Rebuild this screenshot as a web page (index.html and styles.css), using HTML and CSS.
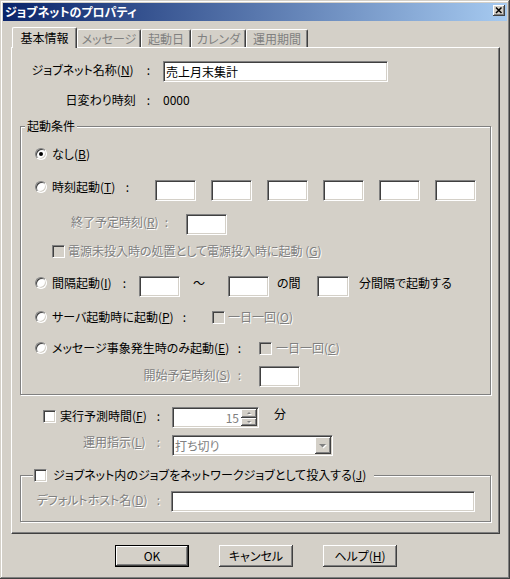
FILE: index.html
```html
<!DOCTYPE html>
<html lang="ja">
<head>
<meta charset="utf-8">
<title>ジョブネットのプロパティ</title>
<link rel="stylesheet" href="styles.css">
</head>
<body>
<div class="window">
  <div class="titlebar">
    <span class="title">ジョブネットのプロパティ</span>
    <span class="close"><svg width="12" height="11" viewBox="0 0 12 11"><path d="M3 2.5 L8.5 8 M8.5 2.5 L3 8" stroke="#000" stroke-width="1.5" fill="none"/></svg></span>
  </div>

  <div class="tabs">
    <div class="tab sel t1">基本情報</div>
    <div class="tab t2">メッセージ</div>
    <div class="tab t3">起動日</div>
    <div class="tab t4">カレンダ</div>
    <div class="tab t5">運用期間</div>
  </div>

  <div class="panel">
    <div class="row r-name">
      <div class="lab w-name mt2">ジョブネット名称(<u>N</u>)<span class="c c13">:</span></div>
      <div class="edit e-name">売上月末集計</div>
    </div>
    <div class="row r-day">
      <div class="lab w-name">日変わり時刻<span class="c c11">:</span></div>
      <div class="val">0000</div>
    </div>

    <div class="group g1">
      <div class="legend">起動条件</div>

      <div class="row mid rC">
        <span class="radio on"></span><span>なし(<u>B</u>)</span>
      </div>

      <div class="row rD">
        <div class="opt w-d"><span class="radio"></span><span>時刻起動(<u>T</u>)</span><span class="c">:</span></div>
        <div class="edits ml26">
          <div class="edit e-s"></div>
          <div class="edit e-s"></div>
          <div class="edit e-s"></div>
          <div class="edit e-s"></div>
          <div class="edit e-s"></div>
          <div class="edit e-s"></div>
        </div>
      </div>

      <div class="row rE">
        <div class="lab w-e mt1 dis">終了予定時刻(<u>R</u>)<span class="c c6">:</span></div>
        <div class="edit e-s ml18"></div>
      </div>

      <div class="row mid rF">
        <span class="chk off"></span><span class="dis">電源未投入時の処置として電源投入時に起動 (<u>G</u>)</span>
      </div>

      <div class="row rG">
        <div class="opt w-g"><span class="radio"></span><span>間隔起動(<u>I</u>)</span><span class="c">:</span></div>
        <div class="edit e-s ml13"></div>
        <span class="tilde">～</span>
        <div class="edit e-s"></div>
        <span class="between">の間</span>
        <div class="edit e-n"></div>
        <span class="ml10">分間隔で起動する</span>
      </div>

      <div class="row mid rH">
        <div class="opt w-h"><span class="radio"></span><span>サーバ起動時に起動(<u>P</u>)</span><span class="c">:</span></div>
        <span class="chk off ml26"></span><span class="dis">一日一回(<u>O</u>)</span>
      </div>

      <div class="row mid rI">
        <div class="opt w-i"><span class="radio"></span><span>メッセージ事象発生時のみ起動(<u>E</u>)</span><span class="c">:</span></div>
        <span class="chk off ml18"></span><span class="dis ml1">一日一回(<u>C</u>)</span>
      </div>

      <div class="row rJ">
        <div class="lab w-j mt2 dis">開始予定時刻(<u>S</u>)<span class="c c7">:</span></div>
        <div class="edit e-s ml18"></div>
      </div>
    </div>

    <div class="row rK">
      <div class="opt w-k mt2"><span class="chk"></span><span class="k-txt">実行予測時間(<u>F</u>)</span><span class="c">:</span></div>
      <div class="edit spin ml12">
        <span class="s-txt dis-plain">15</span>
        <span class="s-btns">
          <span class="s-btn"><svg width="14" height="7" viewBox="0 0 14 7"><polygon points="6,5 10,5 8,3" fill="#fff"/><polygon points="5,4 9,4 7,2" fill="#808080"/></svg></span>
          <span class="s-btn"><svg width="14" height="7" viewBox="0 0 14 7"><polygon points="6,4 10,4 8,6" fill="#fff"/><polygon points="5,3 9,3 7,5" fill="#808080"/></svg></span>
        </span>
      </div>
      <span class="ml15">分</span>
    </div>

    <div class="row rL">
      <div class="lab w-l dis">運用指示(<u>L</u>)<span class="c c11">:</span></div>
      <div class="edit combo ml12">
        <span class="cb-txt dis-plain">打ち切り</span>
        <span class="dd"><svg width="14" height="16" viewBox="0 0 14 16"><polygon points="4,7 11,7 7.5,10.5" fill="#fff"/><polygon points="3,6 10,6 6.5,9.5" fill="#808080"/></svg></span>
      </div>
    </div>

    <div class="group g2">
      <div class="legend lg2"><span class="chk"></span><span class="ml3">ジョブネット内のジョブをネットワークジョブとして投入する(<u>J</u>)</span></div>
      <div class="row rM">
        <div class="lab w-m mt2 dis">デフォルトホスト名(<u>D</u>)<span class="c c9">:</span></div>
        <div class="edit e-host ml11"></div>
      </div>
    </div>
  </div>

  <div class="buttons">
    <div class="btn def">OK</div>
    <div class="btn">キャンセル</div>
    <div class="btn">ヘルプ(<u>H</u>)</div>
  </div>
</div>
</body>
</html>
```

FILE: styles.css
```css
* { box-sizing: border-box; }
html, body { margin: 0; padding: 0; }
body {
  width: 510px; height: 579px; overflow: hidden;
  background: #d4d0c8;
  font-family: "Noto Sans CJK JP", "Noto Sans", sans-serif;
  font-size: 12px; line-height: 14px; color: #000;
  font-feature-settings: "palt" 1;
}
u { text-decoration: underline; text-underline-offset: 1px; }

.window {
  width: 510px; height: 579px; padding: 3px; background: #d4d0c8;
  box-shadow: inset -1px -1px 0 #404040, inset 1px 1px 0 #d4d0c8,
              inset -2px -2px 0 #808080, inset 2px 2px 0 #fff;
}
.titlebar {
  height: 18px; display: flex; align-items: flex-start; justify-content: space-between;
  background: linear-gradient(to right, #0a246a, #a6caf0);
}
.title { color: #fff; font-weight: bold; margin: 1px 0 0 2px; line-height: 15px; }
.close {
  width: 12px; height: 11px; margin: 2px 2px 0 0; display: flex; background: #d4d0c8;
  box-shadow: inset -1px -1px 0 #404040, inset 1px 1px 0 #fff, inset -2px -2px 0 #808080;
}

/* tabs */
.tabs { display: flex; align-items: flex-end; height: 20px; margin: 6px 0 0 9px; position: relative; z-index: 1; }
.tab {
  height: 18px; background: #d4d0c8; color: #808080;
  border-top: 1px solid #fff; border-left: 1px solid #fff; border-right: 1px solid #404040;
  border-radius: 2px 2px 0 0; box-shadow: inset -1px 0 0 #808080;
  display: flex; align-items: center; justify-content: center;
}
.tab.sel { height: 21px; margin-bottom: -1px; padding-bottom: 1px; color: #000; }
.t1 { width: 65px; } .t2 { width: 64px; } .t3 { width: 50px; } .t4 { width: 55px; } .t5 { width: 62px; }

.panel {
  width: 489px; height: 487px; margin-left: 8px;
  border: 1px solid; border-color: #fff #404040 #404040 #fff;
  box-shadow: inset -1px -1px 0 #808080;
}

/* rows */
.row { display: flex; align-items: flex-start; white-space: nowrap; }
.row.mid { align-items: center; height: 16px; }
.r-name { margin-top: 13px; height: 21px; }
.r-day { margin-top: 11px; height: 14px; }

.lab { display: flex; justify-content: flex-end; flex: none; height: 14px; }
.opt { display: flex; align-items: center; flex: none; height: 14px; }
.opt .c { margin-left: auto; }
.w-name { width: 138px; }
.w-e { width: 147px; }
.w-j { width: 220px; }
.w-l { width: 148px; }
.w-m { width: 139px; }
.w-d { width: 94px; }
.w-g { width: 91px; }
.w-h { width: 151px; }
.w-i { width: 206px; }
.w-k { width: 117px; }

.c6 { margin-left: 6px; } .c7 { margin-left: 7px; } .c9 { margin-left: 9px; }
.c11 { margin-left: 11px; } .c13 { margin-left: 13px; }
.mt1 { margin-top: 1px; } .mt2 { margin-top: 2px; }
.ml1 { margin-left: 1px; } .ml3 { margin-left: 3px; } .ml10 { margin-left: 10px; }
.ml11 { margin-left: 11px; } .ml12 { margin-left: 12px; } .ml13 { margin-left: 13px; }
.ml15 { margin-left: 15px; } .ml18 { margin-left: 18px; } .ml26 { margin-left: 26px; }

.val { margin-left: 13px; }
.dis { color: #808080; text-shadow: 1px 1px 0 #fff; }
.dis-plain { color: #808080; }

/* group boxes */
.group {
  margin-left: 8px; width: 471px;
  border: 1px solid #808080;
  box-shadow: inset 1px 1px 0 #fff, 1px 1px 0 #fff;
}
.g1 { margin-top: 19px; height: 269px; }
.g2 { margin-top: 19px; height: 47px; }
.legend {
  display: flex; align-items: center; width: max-content; height: 14px;
  margin: -8px 0 0 4px; padding: 0 2px; background: #d4d0c8;
}
.legend.lg2 { margin-left: 12px; padding: 0 8px 0 1px; }

.rC { margin-top: 13px; padding-left: 14px; }
.rD { margin-top: 18px; height: 21px; padding-left: 14px; }
.rE { margin-top: 13px; height: 21px; }
.rF { margin-top: 8px; padding-left: 31px; }
.rG { margin-top: 17px; height: 21px; padding-left: 14px; }
.rH { margin-top: 12px; padding-left: 14px; }
.rI { margin-top: 15px; padding-left: 14px; }
.rJ { margin-top: 10px; height: 21px; }
.rK { margin-top: 12px; height: 21px; padding-left: 31px; }
.rL { margin-top: 7px; height: 21px; }
.rM { margin-top: 9px; height: 21px; }

/* controls */
.edit {
  height: 21px; flex: none; background: #fff;
  border: 1px solid; border-color: #808080 #fff #fff #808080;
  box-shadow: inset 1px 1px 0 #404040, inset -1px -1px 0 #d4d0c8;
  padding: 2px 2px 0; line-height: 15px; white-space: nowrap;
}
.e-name { width: 225px; margin-left: 13px; }
.e-s { width: 41px; }
.e-n { width: 32px; }
.e-host { width: 304px; }
.edits { display: flex; gap: 15px; }

.tilde { width: 48px; padding-left: 13px; flex: none; }
.between { width: 48px; padding-left: 8px; flex: none; }

.radio {
  width: 12px; height: 12px; flex: none; border-radius: 50%; background: #fff;
  border: 1px solid; border-color: #808080 #fff #fff #808080;
  box-shadow: inset 1px 1px 0 #404040, inset -1px -1px 0 #d4d0c8;
  margin-right: 5px; display: flex; align-items: center; justify-content: center;
}
.radio.on::after { content: ""; width: 4px; height: 4px; border-radius: 50%; background: #000; }

.chk {
  width: 13px; height: 13px; flex: none; background: #fff;
  border: 1px solid; border-color: #808080 #fff #fff #808080;
  box-shadow: inset 1px 1px 0 #404040, inset -1px -1px 0 #d4d0c8;
  margin-right: 3px;
}
.chk.off { background: #d4d0c8; }
.k-txt { margin-left: 1px; }

.spin { width: 87px; display: flex; padding: 0; }
.s-txt { flex: 1; text-align: right; padding: 2px 2px 0 0; }
.s-btns { width: 16px; margin: 1px 1px 1px 0; display: flex; flex-direction: column; }
.s-btn {
  height: 9px; display: flex; align-items: center; justify-content: center; background: #d4d0c8;
  box-shadow: inset -1px -1px 0 #404040, inset 1px 1px 0 #fff, inset -2px -2px 0 #808080;
}

.combo { width: 161px; display: flex; padding: 0; }
.cb-txt { flex: 1; padding: 2px 0 0 2px; }
.dd {
  width: 16px; margin: 1px; display: flex; align-items: center; justify-content: center; background: #d4d0c8;
  box-shadow: inset -1px -1px 0 #404040, inset 1px 1px 0 #fff, inset -2px -2px 0 #808080;
}

/* buttons */
.buttons { display: flex; gap: 30px; margin: 11px 0 0 112px; }
.btn {
  width: 74px; height: 22px; display: flex; align-items: center; justify-content: center;
  background: #d4d0c8;
  box-shadow: inset -1px -1px 0 #404040, inset 1px 1px 0 #fff, inset -2px -2px 0 #808080;
}
.btn.def { border: 1px solid #000; }
```
